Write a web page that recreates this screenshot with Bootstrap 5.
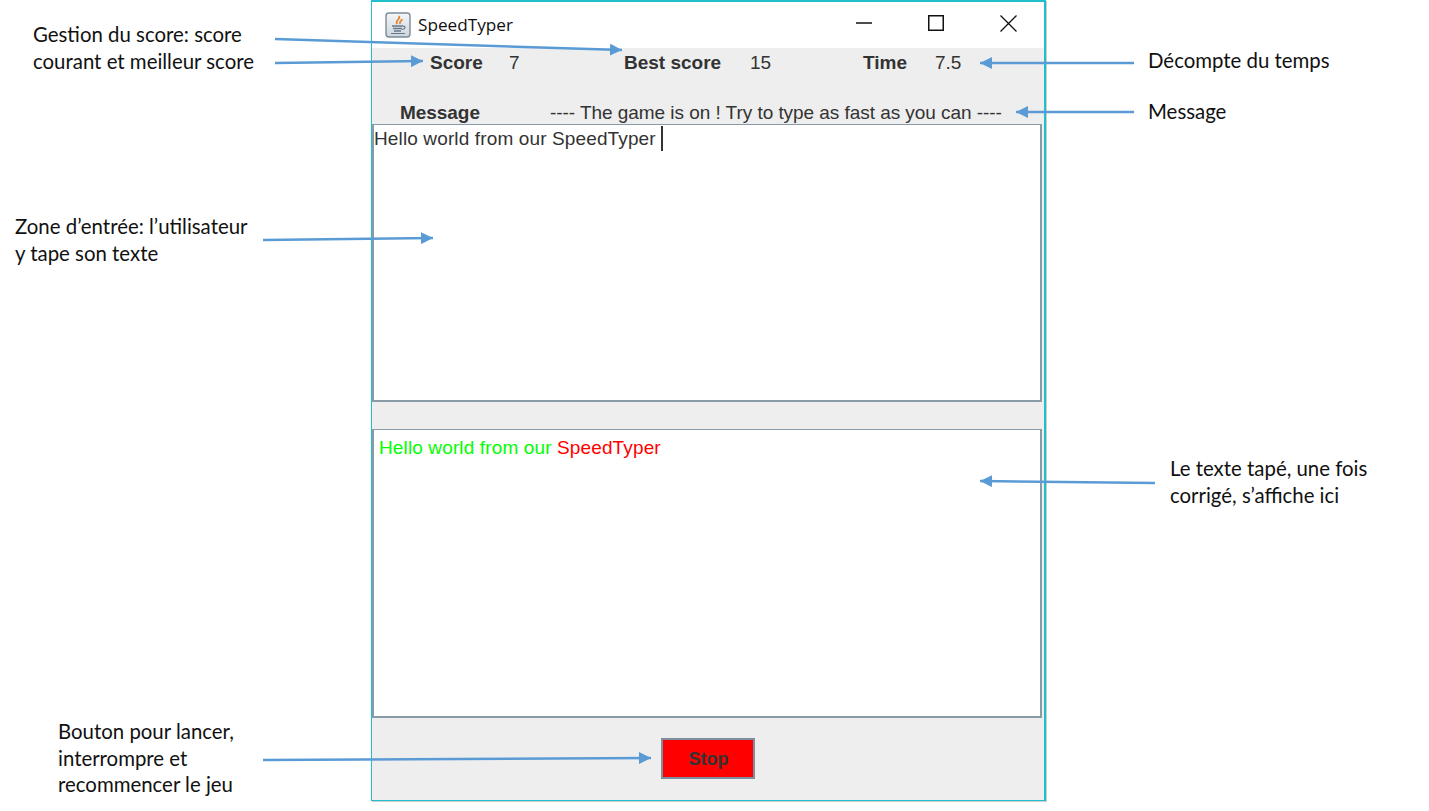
<!DOCTYPE html>
<html lang="fr">
  <head>
    <meta charset="UTF-8" />
    <meta name="viewport" content="width=device-width, initial-scale=1.0" />
    <title>SpeedTyper</title>
    <link
      href="https://cdn.jsdelivr.net/npm/bootstrap@5.3.2/dist/css/bootstrap.min.css"
      rel="stylesheet"
    />
    <style>
      body {
        width: 1429px;
        height: 811px;
        overflow: hidden;
        background: #fff;
        position: relative;
      }
      /* annotations autour de la fenetre */
      .note {
        position: absolute;
        font-family: Lato, "Liberation Sans", sans-serif;
        font-size: 20.4px;
        line-height: 26.5px;
        color: #111;
        white-space: nowrap;
      }
      .note-score { left: 33px; top: 21px; }
      .note-time { left: 1148px; top: 47px; }
      .note-msg { left: 1148px; top: 98px; }
      .note-input { left: 15px; top: 213px; }
      .note-output { left: 1170px; top: 455px; }
      .note-btn { left: 58px; top: 718px; }
      .arrows {
        position: absolute;
        left: 0;
        top: 0;
        z-index: 5;
        pointer-events: none;
      }
      /* fenetre java */
      .app-window {
        position: absolute;
        left: 371px;
        top: 0;
        width: 675px;
        height: 801px;
        border: 1px solid #1fc0cc;
        border-top-width: 2px;
        border-right-width: 2px;
        box-shadow: 1px 1px 0 #ccc;
        background: #eee;
        font-family: "Liberation Sans", Arial, sans-serif;
        font-size: 19px;
        color: #333;
      }
      .title-bar {
        height: 46px;
        background: #fff;
        color: #111;
        font-family: "Open Sans", sans-serif;
        font-size: 17.2px;
        padding-left: 5px;
      }
      .title-label {
        margin-left: 7px;
      }
      .win-group {
        margin-top: -6px;
      }
      .win-btn {
        width: 72px;
      }
      .stat-row {
        height: 76px;
        padding-top: 1px;
      }
      .stat-line {
        height: 28px;
        line-height: 28px;
      }
      .msg-line {
        margin-top: 22px;
        letter-spacing: -0.05px;
      }
      .cell {
        flex: none;
      }
      .w-score { margin-left: 58px; width: 79px; }
      .w-seven { width: 115px; }
      .w-best { width: 126px; }
      .w-fifteen { width: 113px; }
      .w-time { width: 72px; }
      .w-msg { margin-left: 28px; width: 150px; }
      .text-zone {
        background: #fff;
        border: 1px solid #8a9ba8;
        border-width: 1px 2px 2px 2px;
        margin-right: 2px;
        letter-spacing: 0.13px;
        line-height: 28px;
      }
      .zone-in {
        height: 278px;
      }
      .zone-out {
        height: 289px;
        margin-top: 27px;
        padding: 4px 0 0 5px;
      }
      .caret-bar {
        display: inline-block;
        width: 2px;
        height: 25px;
        background: #333;
        vertical-align: -6px;
        margin-left: 5px;
      }
      .txt-ok { color: #00ff00; }
      .txt-bad { color: #ff0000; }
      .btn-zone {
        height: 81px;
      }
      .stop-btn {
        width: 94px;
        height: 41px;
        background: #ff0000;
        border: 2px solid #7d8f9f;
        border-radius: 0;
        color: #333;
        font-family: "Liberation Sans", Arial, sans-serif;
        font-weight: 700;
        font-size: 18px;
        padding: 1px 0 0 1px;
      }
    </style>
  </head>
  <body>
    <div class="note note-score">Gestion du score: score<br />courant et meilleur score</div>
    <div class="note note-time">Décompte du temps</div>
    <div class="note note-msg">Message</div>
    <div class="note note-input">Zone d’entrée: l’utilisateur<br />y tape son texte</div>
    <div class="note note-output">Le texte tapé, une fois<br />corrigé, s’affiche ici</div>
    <div class="note note-btn">Bouton pour lancer,<br />interrompre et<br />recommencer le jeu</div>

    <div class="app-window d-flex flex-column">
      <div class="title-bar d-flex align-items-center">
        <svg class="ms-2" width="26" height="26" viewBox="0 0 26 26">
          <defs>
            <linearGradient id="iconBg" x1="0" y1="0" x2="0" y2="1">
              <stop offset="0" stop-color="#f4f6f8" />
              <stop offset="1" stop-color="#cdd5dc" />
            </linearGradient>
          </defs>
          <rect x="1" y="1" width="24" height="24" rx="3" fill="url(#iconBg)" stroke="#7b8a99" stroke-width="1.400" />
          <path d="M14 4c2 3-4 4-2 8M17 7c0 2-3 2-2 5" fill="none" stroke="#e8842a" stroke-width="1.800" />
          <path d="M7 14h11M8 16.500h9M9 19h7" stroke="#66788a" stroke-width="1.500" />
          <path d="M18 14c3 0 2.500 3-1 3.500M6 21.500h14" fill="none" stroke="#66788a" stroke-width="1.200" />
        </svg>
        <span class="title-label flex-grow-1">SpeedTyper</span>
        <div class="win-group d-flex">
          <div class="win-btn text-center">
            <svg width="16" height="16" viewBox="0 0 16 16"><path d="M0 8h16" stroke="#111" stroke-width="1.500" /></svg>
          </div>
          <div class="win-btn text-center">
            <svg width="16" height="16" viewBox="0 0 16 16"><rect x="0.750" y="0.750" width="14.500" height="14.500" fill="none" stroke="#111" stroke-width="1.500" /></svg>
          </div>
          <div class="win-btn text-center">
            <svg width="17" height="17" viewBox="0 0 17 17"><path d="M0.500 0.500l16 16M16.500 0.500l-16 16" stroke="#111" stroke-width="1.300" /></svg>
          </div>
        </div>
      </div>

      <div class="stat-row">
        <div class="stat-line d-flex">
          <div class="cell w-score fw-bold">Score</div>
          <div class="cell w-seven">7</div>
          <div class="cell w-best fw-bold">Best score</div>
          <div class="cell w-fifteen">15</div>
          <div class="cell w-time fw-bold">Time</div>
          <div class="cell">7.5</div>
        </div>
        <div class="stat-line msg-line d-flex">
          <div class="cell w-msg fw-bold">Message</div>
          <div class="cell">---- The game is on ! Try to type as fast as you can ----</div>
        </div>
      </div>

      <div class="text-zone zone-in">Hello world from our SpeedTyper<span class="caret-bar"></span></div>
      <div class="text-zone zone-out"><span class="txt-ok">Hello world from our</span> <span class="txt-bad">SpeedTyper</span></div>

      <div class="btn-zone d-flex justify-content-center align-items-center">
        <button type="button" class="btn stop-btn">Stop</button>
      </div>
    </div>

    <svg class="arrows" width="1429" height="811" viewBox="0 0 1429 811">
      <defs>
        <marker id="tip" markerUnits="userSpaceOnUse" markerWidth="13" markerHeight="12" refX="12" refY="6" orient="auto">
          <path d="M0 0L12 6L0 12z" fill="#5b9bd5" />
        </marker>
      </defs>
      <g stroke="#5b9bd5" stroke-width="2.500" fill="none">
        <path d="M275 39L622 50" marker-end="url(#tip)" />
        <path d="M275 63L423 61" marker-end="url(#tip)" />
        <path d="M1134 63L980 63" marker-end="url(#tip)" />
        <path d="M1134 112L1016 112" marker-end="url(#tip)" />
        <path d="M263 240L433 238" marker-end="url(#tip)" />
        <path d="M1155 483L980 481" marker-end="url(#tip)" />
        <path d="M263 760L651 758" marker-end="url(#tip)" />
      </g>
    </svg>

    <script src="https://cdn.jsdelivr.net/npm/bootstrap@5.3.2/dist/js/bootstrap.bundle.min.js"></script>
  </body>
</html>
